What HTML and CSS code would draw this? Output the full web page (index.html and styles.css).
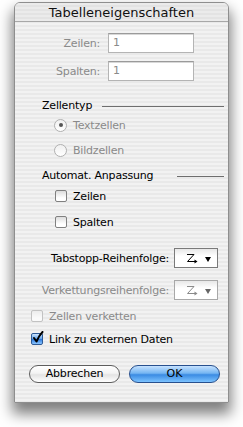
FILE: index.html
```html
<!DOCTYPE html>
<html>
<head>
<meta charset="utf-8">
<link rel="stylesheet" href="styles.css">
</head>
<body>
<div class="window">
  <div class="titlebar">Tabelleneigenschaften</div>
  <div class="content">
    <div class="field m11"><span class="flabel dis">Zeilen:</span><div class="input">1</div></div>
    <div class="field m8"><span class="flabel dis">Spalten:</span><div class="input">1</div></div>

    <div class="group m17"><span>Zellentyp</span><span class="rule r1"></span></div>
    <div class="opt indent-radio m6"><span class="radio on"></span><span class="dis">Textzellen</span></div>
    <div class="opt indent-radio m11"><span class="radio"></span><span class="dis">Bildzellen</span></div>

    <div class="group m11"><span>Automat. Anpassung</span><span class="rule r2"></span></div>
    <div class="opt indent-cb m7"><span class="cb"></span><span>Zeilen</span></div>
    <div class="opt indent-cb m12"><span class="cb"></span><span>Spalten</span></div>

    <div class="poprow m19"><span>Tabstopp-Reihenfolge:</span>
      <div class="popup">
        <svg class="zicon" width="12" height="10" viewBox="0 0 12 10"><path d="M1 1.5H8L1.5 8.5H9" fill="none" stroke="#000" stroke-width="1"/><path d="M8.5 6.5L11.5 8.5L8.5 10.5Z" fill="#000"/></svg>
        <span class="tri"></span>
      </div>
    </div>
    <div class="poprow m12 dis"><span>Verkettungsreihenfolge:</span>
      <div class="popup dispop">
        <svg class="zicon" width="12" height="10" viewBox="0 0 12 10"><path d="M1 1.5H8L1.5 8.5H9" fill="none" stroke="#8a8a8a" stroke-width="1"/><path d="M8.5 6.5L11.5 8.5L8.5 10.5Z" fill="#8a8a8a"/></svg>
        <span class="tri"></span>
      </div>
    </div>

    <div class="opt indent-cb2 m9"><span class="cb discb"></span><span class="dis">Zellen verketten</span></div>
    <div class="opt indent-cb2 m9"><span class="cb checked"><svg class="check" width="12" height="13" viewBox="0 0 12 13"><path d="M2 7L4.5 10.5C6 7 8 3.5 10.5 1" fill="none" stroke="#000" stroke-width="2" stroke-linecap="round" stroke-linejoin="round"/></svg></span><span>Link zu externen Daten</span></div>

    <div class="buttons m19">
      <div class="btn cancel">Abbrechen</div>
      <div class="btn ok">OK</div>
    </div>
  </div>
</div>
</body>
</html>
```
FILE: styles.css
```css
html, body {
  margin: 0;
  padding: 0;
  background: #fff;
}
body {
  width: 243px;
  height: 427px;
  overflow: hidden;
  font-family: "DejaVu Sans", "Liberation Sans", sans-serif;
  font-size: 11px;
  letter-spacing: -0.2px;
  color: #000;
}
.window {
  margin: 2px 0 0 14px;
  width: 213px;
  height: 399px;
  border: 1px solid #8e8e8e;
  border-radius: 6px 6px 0 0;
  background: repeating-linear-gradient(#f2f2f2 0 2px, #e9e9e9 2px 4px);
  box-shadow: 0 9px 14px 2px rgba(0,0,0,0.5);
  display: flex;
  flex-direction: column;
}
.titlebar {
  height: 18px;
  border-bottom: 1px solid #a8a8a8;
  border-radius: 5px 5px 0 0;
  background: repeating-linear-gradient(#ebebeb 0 2px, #e3e3e3 2px 4px);
  font-size: 13px;
  letter-spacing: 0;
  line-height: 19px;
  text-align: center;
  color: #111;
}
.content {
  display: flex;
  flex-direction: column;
}
.m6 { margin-top: 6px; }
.m7 { margin-top: 7px; }
.m8 { margin-top: 8px; }
.m9 { margin-top: 9px; }
.m11 { margin-top: 11px; }
.m12 { margin-top: 12px; }
.m17 { margin-top: 17px; }
.m19 { margin-top: 19px; }
.dis { color: #8a8a8a; }

.field {
  display: flex;
  align-items: center;
  height: 20px;
}
.flabel {
  width: 85px;
  text-align: right;
}
.input {
  margin-left: 8px;
  width: 80px;
  height: 18px;
  border: 1px solid #b4b4b4;
  border-top-color: #9a9a9a;
  background: #fff;
  box-shadow: inset 0 1px 0 #d8d8d8;
  color: #8a8a8a;
  padding-left: 4px;
  line-height: 18px;
}

.group {
  display: flex;
  align-items: center;
  justify-content: space-between;
  height: 14px;
  padding: 0 4px 0 27px;
}
.rule {
  height: 1px;
  background: #6e6e6e;
  margin-top: 2px;
}
.r1 { width: 122px; }
.r2 { width: 47px; }

.opt {
  display: flex;
  align-items: center;
  height: 14px;
  gap: 6px;
}
.indent-radio { padding-left: 39px; }
.indent-cb { padding-left: 40px; }
.indent-cb2 { padding-left: 16px; }

.radio {
  width: 11px;
  height: 11px;
  border: 1px solid #b0b0b0;
  border-radius: 50%;
  background: linear-gradient(#f0f0f0, #fff);
  display: flex;
  align-items: center;
  justify-content: center;
}
.radio.on::after {
  content: "";
  width: 4px;
  height: 4px;
  border-radius: 50%;
  background: #555;
}
.cb {
  position: relative;
  width: 10px;
  height: 10px;
  border: 1px solid #808080;
  border-radius: 2px;
  background: linear-gradient(#dcdcdc, #fff 70%);
}
.discb {
  border-color: #c2c2c2;
  background: linear-gradient(#ececec, #fafafa 70%);
}
.cb.checked {
  border-color: #2d5a96;
  background: linear-gradient(#cfe6ff 0, #6aa8ec 45%, #2f7ce0 55%, #8cc6ff 100%);
}
.check {
  position: absolute;
  left: 0;
  top: -3px;
}

.poprow {
  display: flex;
  align-items: center;
  justify-content: flex-end;
  gap: 5px;
  height: 20px;
  padding-right: 10px;
}
.popup {
  width: 42px;
  height: 18px;
  border: 1px solid #7a7a7a;
  background: linear-gradient(#e8e8e8, #fff 40%);
  display: flex;
  align-items: center;
}
.dispop { border-color: #a8a8a8; }
.zicon { margin-left: 11px; overflow: visible; }
.tri {
  margin-left: 7px;
  width: 0;
  height: 0;
  border-left: 3px solid transparent;
  border-right: 3px solid transparent;
  border-top: 5px solid #000;
  margin-top: 2px;
}
.dispop .tri { border-top-color: #666; }

.buttons {
  display: flex;
  gap: 9px;
  padding-left: 14px;
  height: 18px;
}
.btn {
  width: 89px;
  height: 16px;
  border-radius: 9px;
  text-align: center;
  line-height: 16px;
  font-size: 11px;
}
.cancel {
  border: 1px solid #5e5e5e;
  background: linear-gradient(#ffffff 0, #f3f3f3 45%, #e3e3e3 55%, #ffffff 100%);
}
.ok {
  border: 1px solid #28508e;
  background: linear-gradient(#c6e2ff 0, #75b5f2 45%, #3b8be3 55%, #7cc3ff 100%);
  letter-spacing: 0;
}
```
